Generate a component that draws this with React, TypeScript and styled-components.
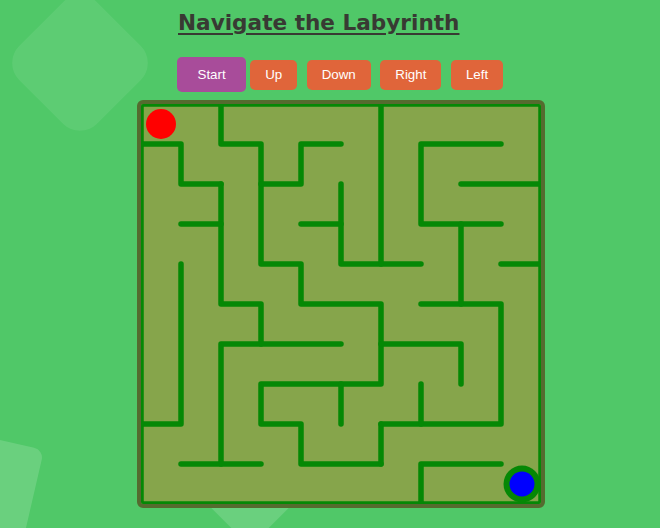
import React from 'react';
import styled, { createGlobalStyle } from 'styled-components';

const GlobalStyle = createGlobalStyle`
  html, body {
    margin: 0;
    padding: 0;
    background: #50c868;
  }
`;

const Page = styled.div`
  position: relative;
  height: 528px;
  overflow: hidden;
  background: #50c868;
`;

// soft rounded tiles sitting behind everything
const Tile = styled.div<{ $left: number; $top: number; $size: number; $angle: number; $alpha: number; $radius: number }>`
  position: absolute;
  left: ${(p) => p.$left}px;
  top: ${(p) => p.$top}px;
  width: ${(p) => p.$size}px;
  height: ${(p) => p.$size}px;
  border-radius: ${(p) => p.$radius}px;
  background: rgba(255, 255, 255, ${(p) => p.$alpha});
  transform: rotate(${(p) => p.$angle}deg);
  z-index: 0;
`;

const Column = styled.div`
  position: relative;
  z-index: 1;
  width: 408px;
  margin-left: 137px;
  padding-top: 10px;
  display: flex;
  flex-direction: column;
`;

const Title = styled.h1`
  margin: 0;
  padding-left: 41px;
  font-family: 'DejaVu Sans', Verdana, sans-serif;
  font-weight: bold;
  font-size: 21.6px;
  line-height: 25px;
  color: #383a33;
  text-decoration: underline;
  text-decoration-thickness: 2px;
  text-underline-offset: 3px;
`;

const Controls = styled.div`
  display: flex;
  align-items: center;
  height: 35px;
  margin-top: 22px;
  padding-left: 40px;
`;

const Button = styled.button<{ $primary?: boolean }>`
  height: ${(p) => (p.$primary ? 35 : 30)}px;
  padding: 0 ${(p) => (p.$primary ? 20.5 : 15)}px;
  margin-right: ${(p) => (p.$primary ? 4 : 9.5)}px;
  border: none;
  border-radius: 5px;
  background: ${(p) => (p.$primary ? '#a84c9a' : '#e0653a')};
  color: #fff;
  font-family: 'Liberation Sans', Arial, sans-serif;
  font-size: 13.33px;
  cursor: pointer;
`;

const MazeFrame = styled.div`
  margin-top: 8px;
  width: 400px;
  height: 400px;
  border: 4px solid #556b2f;
  border-radius: 6px;
  background: #86a54b;
  overflow: hidden;
`;

const CELL = 40;
const WALL = '#058805';

// wall runs as lists of grid points
const walls: [number, number][][] = [
  [[0, 1], [1, 1], [1, 2], [2, 2]],
  [[2, 2], [2, 5], [3, 5], [3, 6]],
  [[1, 3], [2, 3]],
  [[2, 0], [2, 1], [3, 1], [3, 4], [4, 4], [4, 5], [6, 5], [6, 7], [3, 7], [3, 8], [4, 8], [4, 9], [6, 9]],
  [[6, 8], [6, 9]],
  [[6, 8], [9, 8], [9, 5], [7, 5]],
  [[7, 7], [7, 8]],
  [[5, 7], [5, 8]],
  [[5, 1], [4, 1], [4, 2], [3, 2]],
  [[4, 3], [5, 3]],
  [[5, 2], [5, 4], [7, 4]],
  [[6, 0], [6, 4]],
  [[9, 1], [7, 1], [7, 3], [9, 3]],
  [[8, 3], [8, 5]],
  [[8, 2], [10, 2]],
  [[9, 4], [10, 4]],
  [[1, 4], [1, 8], [0, 8]],
  [[5, 6], [2, 6], [2, 9]],
  [[1, 9], [3, 9]],
  [[6, 6], [8, 6], [8, 7]],
  [[9, 9], [7, 9], [7, 10]],
];

const Maze = () => (
  <svg width="400" height="400" viewBox="0 0 400 400">
    <rect x="0" y="0" width="400" height="400" fill="none" stroke={WALL} strokeWidth="5.5" />
    {walls.map((run, i) => (
      <polyline
        key={i}
        points={run.map(([x, y]) => `${x * CELL},${y * CELL}`).join(' ')}
        fill="none"
        stroke={WALL}
        strokeWidth="5.5"
        strokeLinecap="round"
        strokeLinejoin="round"
      />
    ))}
    <circle cx="20" cy="20" r="15" fill="#ff0000" />
    <circle cx="381" cy="380" r="18.5" fill={WALL} />
    <circle cx="381" cy="380" r="12.5" fill="#0000ff" />
  </svg>
);

const App = () => (
  <Page>
    <GlobalStyle />
    <Tile $left={25} $top={8} $size={110} $angle={45} $alpha={0.08} $radius={24} />
    <Tile $left={-88} $top={435} $size={120} $angle={13} $alpha={0.15} $radius={10} />
    <Tile $left={200} $top={426} $size={100} $angle={45} $alpha={0.15} $radius={14} />
    <Column>
      <Title>Navigate the Labyrinth</Title>
      <Controls>
        <Button $primary>Start</Button>
        <Button>Up</Button>
        <Button>Down</Button>
        <Button>Right</Button>
        <Button>Left</Button>
      </Controls>
      <MazeFrame>
        <Maze />
      </MazeFrame>
    </Column>
  </Page>
);

export default App;
